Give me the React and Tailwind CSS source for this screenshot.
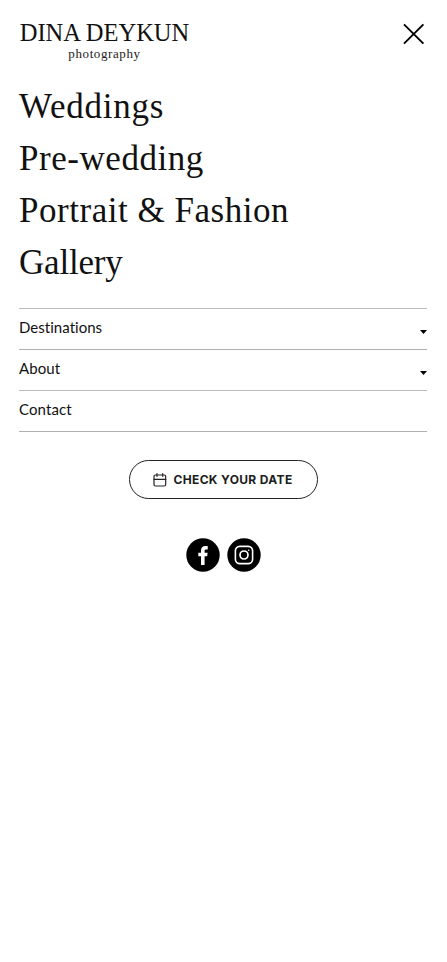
import { clsx } from "clsx";

const mainLinks = [
    { label: "Weddings", tracking: "tracking-[0.75px]" },
    { label: "Pre-wedding", tracking: "tracking-[0.55px]" },
    { label: "Portrait & Fashion", tracking: "tracking-[0.53px]" },
    { label: "Gallery", tracking: "tracking-[-0.2px]" },
];

const subLinks = [
    { label: "Destinations", height: "h-[41px]", border: "border-[#b0b0b0]", tracking: "tracking-[0.03px]", expandable: true },
    { label: "About", height: "h-[41px]", border: "border-[#bcbcbc]", tracking: "tracking-[0.1px]", expandable: true },
    { label: "Contact", height: "h-[41px]", border: "border-[#b0b0b0]", tracking: "tracking-[0.1px]", expandable: false },
];

function CloseIcon() {
    return (
        <svg className="w-[22px] h-[22px]" viewBox="0 0 22 22" fill="none" stroke="#000" strokeWidth="1.9">
            <path d="M1 1.3 20.4 20.7M20.4 1.3 1 20.7" />
        </svg>
    );
}

function CalendarIcon() {
    return (
        <svg className="w-[14px] h-[14px]" viewBox="0 0 14 14" fill="none" stroke="#222" strokeWidth="1.2" strokeLinecap="round" strokeLinejoin="round">
            <rect x="1" y="2" width="11.7" height="11" rx="1.5" />
            <path d="M1 6.3h11.7M4 .7v2.6M9.7.7v2.6" />
        </svg>
    );
}

function FacebookIcon() {
    return (
        <svg className="w-[34px] h-[34px]" viewBox="0 0 34 34">
            <circle cx="17" cy="17" r="16.7" fill="#000" />
            <path d="M15 27v-8.8h-2.7v-3.5H15v-2.2c0-3 1.7-4.5 4.2-4.5h2.5v3.5h-1.5c-1.2 0-1.6.5-1.6 1.5v1.7h3l-.4 3.5h-2.6V27z" fill="#fff" />
        </svg>
    );
}

function InstagramIcon() {
    return (
        <svg className="w-[34px] h-[34px]" viewBox="0 0 34 34" fill="none">
            <circle cx="17" cy="17" r="16.7" fill="#000" />
            <rect x="8.4" y="8.4" width="17.2" height="17.2" rx="4.4" stroke="#fff" strokeWidth="1.6" />
            <circle cx="17" cy="17" r="4" stroke="#fff" strokeWidth="1.7" />
            <circle cx="21.7" cy="12.3" r="0.8" fill="#fff" />
        </svg>
    );
}

export default function App() {
    return (
        <div className="min-h-[962px] bg-white text-black pl-[19px] pr-5 pt-[19px]">
            <header className="flex justify-between h-[62px]">
                <a href="#" className="w-[171px] flex flex-col items-center font-['Liberation_Serif',serif] whitespace-nowrap">
                    <span className="text-[24.5px] leading-7 text-[#111]">DINA DEYKUN</span>
                    <span className="text-[13px] leading-[14px] tracking-[0.6px] text-[#222]">photography</span>
                </a>
                <button aria-label="Close menu" className="self-start mt-1 mr-[2px]">
                    <CloseIcon />
                </button>
            </header>

            <nav>
                <ul className="font-['Liberation_Serif',serif] text-[35px] leading-[52px] text-[#111] whitespace-nowrap">
                    {mainLinks.map((link) => (
                        <li key={link.label} className={link.tracking}>
                            <a href="#">{link.label}</a>
                        </li>
                    ))}
                </ul>
                <ul className="mt-[19px] border-t border-[#bcbcbc] font-['Lato',sans-serif] text-[15px] text-[#111]">
                    {subLinks.map((link) => (
                        <li key={link.label} className={clsx("flex items-center justify-between border-b", link.height, link.border)}>
                            <a href="#" className={clsx("leading-5 pb-1", link.tracking)}>{link.label}</a>
                            {link.expandable && (
                                <svg className="w-[7px] h-[4px] mt-[5px]" viewBox="0 0 7 4">
                                    <path d="M0 0h7L3.5 4z" fill="#000" />
                                </svg>
                            )}
                        </li>
                    ))}
                </ul>
            </nav>

            <div className="mt-7 flex justify-center">
                <a href="#" className="w-[189px] h-[39px] rounded-full border border-[#222] flex items-center justify-center gap-1.5 font-['Inter',sans-serif] font-bold text-[12px] tracking-[0.35px] text-[#1c1c1c] whitespace-nowrap">
                    <CalendarIcon />
                    <span className="pt-px">CHECK YOUR DATE</span>
                </a>
            </div>

            <div className="mt-[39px] flex justify-center gap-[7px]">
                <a href="#" aria-label="Facebook"><FacebookIcon /></a>
                <a href="#" aria-label="Instagram"><InstagramIcon /></a>
            </div>
        </div>
    );
}
